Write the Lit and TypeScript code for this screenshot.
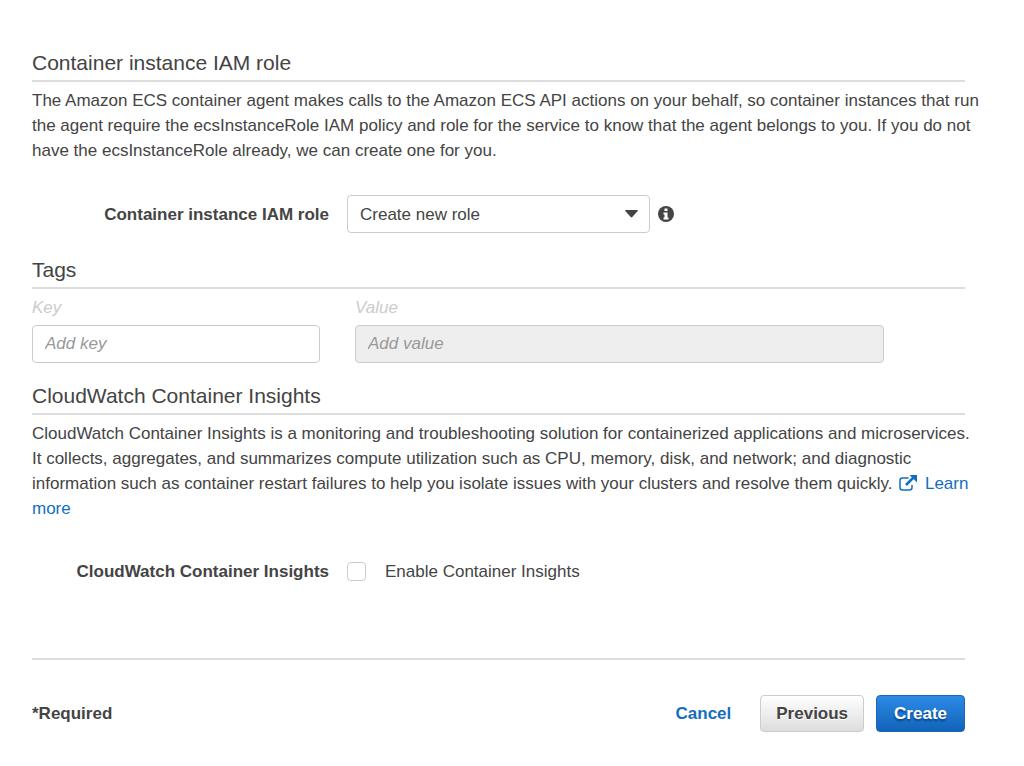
import { LitElement, html, css } from "lit";
import { customElement, state } from "lit/decorators.js";

@customElement("app-root")
class AppRoot extends LitElement {
  @state() private key = "";

  static styles = css`
    :host { display: block; font: 17px/25px "Liberation Sans", Arial, sans-serif; color: #444; }
    * { box-sizing: border-box; }
    .page { padding: 46px 59px 34px 32px; }
    h2 { margin: 0; font-size: 21px; line-height: 34px; font-weight: 400; border-bottom: 2px solid #ddd; }
    p { margin: 0 -16px 0 0; padding-top: 6px; }
    a { color: #146ebf; text-decoration: none; }
    .row { display: flex; align-items: center; }
    .row-label { width: 297px; margin-right: 18px; text-align: right; font-weight: 700; }
    .role { padding: 32px 0 20px; }
    .select-wrap { position: relative; width: 303px; }
    select, .text { width: 100%; height: 38px; padding: 0 12px; font: inherit; color: #444; background: #fff; border: 1px solid #ccc; border-radius: 4px; appearance: none; }
    select { display: block; }
    .arrow { position: absolute; right: 12px; top: 15px; pointer-events: none; }
    .info { margin-left: 8px; }
    .tags { display: grid; grid-template-columns: 288px minmax(0, 529px); column-gap: 35px; padding: 6px 0 16px; }
    .tags label { display: block; color: #ccc; font-style: italic; margin-bottom: 5px; }
    .text { display: block; }
    .text::placeholder { color: #999; font-style: italic; opacity: 1; }
    .text:disabled { background: #eee; }
    .ext { vertical-align: -2px; margin: 0 3px 0 2px; }
    .insights { padding: 38px 0 74px; }
    .check { appearance: none; width: 19px; height: 19px; margin: 0 19px 0 0; border: 1px solid #ccc; border-radius: 4px; background: #fff; }
    footer { display: flex; align-items: center; border-top: 2px solid #ddd; padding-top: 35px; font-weight: 700; }
    .required { margin-right: auto; }
    button { height: 37px; padding: 0 17px; font: inherit; border-radius: 4px; border: 1px solid #ccc; color: #444; }
    .cancel { border: 0; background: none; color: #146ebf; padding: 0; margin-right: 29px; }
    .previous { padding: 0 15px; background: linear-gradient(#fff, #ddd); margin-right: 12px; text-shadow: 0 1px 0 #fff; }
    .create { color: #fff; border-color: #1a66b8; background: linear-gradient(#2d8ae6, #1163b8); text-shadow: 0 2px 2px #0a4280; }
  `;

  render() {
    return html`
      <main class="page">
        <section>
          <h2>Container instance IAM role</h2>
          <p>The Amazon ECS container agent makes calls to the Amazon ECS API actions on your behalf, so container instances that run the agent require the ecsInstanceRole IAM policy and role for the service to know that the agent belongs to you. If you do not have the ecsInstanceRole already, we can create one for you.</p>
          <div class="row role">
            <label class="row-label" for="role">Container instance IAM role</label>
            <div class="select-wrap">
              <select id="role"><option>Create new role</option></select>
              <svg class="arrow" width="13" height="8" viewBox="0 0 13 8"><path d="M1 0h11q1.500 0 .7 1L7.300 7q-.8.800-1.600 0L.3 1Q-.5 0 1 0z" fill="#444" /></svg>
            </div>
            <svg class="info" width="16" height="16" viewBox="0 0 16 16"><circle cx="8" cy="8" r="8" fill="#444" /><path d="M6.500 2.500h3v2.400h-3zM5.500 6.500h4v5h1v2h-5v-2h1v-3h-1z" fill="#fff" /></svg>
          </div>
        </section>
        <section>
          <h2>Tags</h2>
          <div class="tags">
            <div><label for="key">Key</label><input class="text" id="key" placeholder="Add key" .value=${this.key} @input=${(e: Event) => (this.key = (e.target as HTMLInputElement).value)} /></div>
            <div><label for="value">Value</label><input class="text" id="value" placeholder="Add value" ?disabled=${!this.key} /></div>
          </div>
        </section>
        <section>
          <h2>CloudWatch Container Insights</h2>
          <p>CloudWatch Container Insights is a monitoring and troubleshooting solution for containerized applications and microservices. It collects, aggregates, and summarizes compute utilization such as CPU, memory, disk, and network; and diagnostic information such as container restart failures to help you isolate issues with your clusters and resolve them quickly. <a href="#"><svg class="ext" width="18" height="16" viewBox="0 0 18 16" fill="none" stroke="#146ebf"><path d="M9.500 3H3.500Q1 3 1 5.500v7Q1 15 3.500 15h7q2.500 0 2.500-2.500V10" stroke-width="1.500" /><path d="M7 10l7.500-7.500" stroke-width="2.500" /><path d="M10.500 0H18v7.500z" fill="#146ebf" stroke="none" /></svg> Learn more</a></p>
          <div class="row insights">
            <label class="row-label" for="enable">CloudWatch Container Insights</label>
            <input class="check" id="enable" type="checkbox" /><label for="enable">Enable Container Insights</label>
          </div>
        </section>
        <footer>
          <span class="required">*Required</span>
          <button class="cancel">Cancel</button>
          <button class="previous">Previous</button>
          <button class="create">Create</button>
        </footer>
      </main>`;
  }
}
